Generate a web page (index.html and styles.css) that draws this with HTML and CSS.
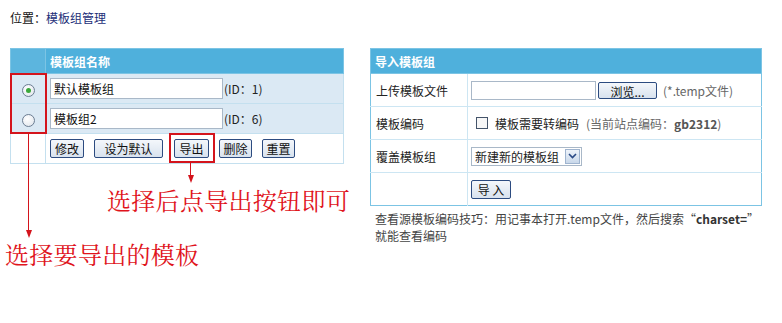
FILE: index.html
```html
<!DOCTYPE html>
<html lang="zh">
<head>
<meta charset="utf-8">
<link rel="stylesheet" href="styles.css">
</head>
<body>
<div class="page">
  <div class="crumb">位置：<span class="crumb-link">模板组管理</span></div>
  <div class="panels">
    <div class="left">
      <table class="grid gl">
        <tr class="hd"><th class="sel"></th><th class="name">模板组名称</th></tr>
        <tr class="row"><td class="sel"><input type="radio" name="g" class="radio" checked></td><td><input class="txt" value="默认模板组"><span class="id">(ID：1)</span></td></tr>
        <tr class="row"><td class="sel"><input type="radio" name="g" class="radio"></td><td><input class="txt" value="模板组2"><span class="id">(ID：6)</span></td></tr>
        <tr class="btnrow"><td class="sel"></td><td><div class="btns"><button class="btn b34">修改</button><button class="btn b69">设为默认</button><button class="btn b35">导出</button><button class="btn b33">删除</button><button class="btn b33">重置</button></div></td></tr>
      </table>
    </div>
    <div class="right">
      <table class="grid gr">
        <tr class="hd"><th colspan="2">导入模板组</th></tr>
        <tr><td class="lbl">上传模板文件</td><td><div class="cell"><span class="file"></span><button class="btn browse">浏览...</button><span class="hint">(*.temp文件)</span></div></td></tr>
        <tr><td class="lbl">模板编码</td><td><div class="cell"><span class="chk"></span><span class="chklbl">模板需要转编码</span><span class="hint2">(当前站点编码：<b>gb2312</b>)</span></div></td></tr>
        <tr><td class="lbl">覆盖模板组</td><td><div class="cell"><span class="select">新建新的模板组<span class="arrow"><svg width="9" height="6" viewBox="0 0 9 6"><path d="M1 1 L4.5 4.5 L8 1" fill="none" stroke="#2a4a86" stroke-width="1.6"/></svg></span></span></div></td></tr>
        <tr><td class="lbl"></td><td><div class="cell"><button class="btn imp">导 入</button></div></td></tr>
      </table>
      <div class="note">查看源模板编码技巧：用记事本打开.temp文件，然后搜索“<b>charset=</b>”<br>就能查看编码</div>
    </div>
  </div>
</div>
<div class="mark mark-radio"></div>
<div class="mark mark-export"></div>
<div class="line line1"></div><div class="head head1"></div>
<div class="line line2"></div><div class="head head2"></div>
<div class="anno anno1">选择要导出的模板</div>
<div class="anno anno2">选择后点导出按钮即可</div>
</body>
</html>
```
FILE: styles.css
```css
* { box-sizing: border-box; }
body { margin: 0; background: #fff; font-family: "Noto Sans CJK SC", "DejaVu Sans", sans-serif; font-size: 12px; color: #222; position: relative; width: 782px; height: 323px; overflow: hidden; }
.page { padding: 10px 0 0 10px; }
.crumb { height: 16px; line-height: 16px; color: #111; }
.crumb-link { color: #1c2e78; }
.panels { display: flex; margin-top: 22px; }
.left { width: 334px; }
.right { width: 392px; margin-left: 26px; }
.grid { border-collapse: collapse; width: 100%; border: 1px solid #7cc4e4; }
.grid th { background: #4fb0dc; color: #fff; font-weight: bold; text-align: left; height: 25px; padding: 0 0 0 4px; border: 1px solid #7cc4e4; }
.gl td { border: 1px solid #c4e0ef; padding: 0; }
.gl .sel { width: 35px; text-align: center; }
.gl th.sel { background: #5cb5de; }
.gl .row td { background: #dbe9f4; height: 30px; }
.gl .row td + td { padding-left: 4px; }
.gl .btnrow td { height: 30px; background: #fff; }
.gl .btnrow td + td { padding-left: 4px; }
.txt { width: 173px; height: 21px; border: 1px solid #a9b8c8; padding: 1px 3px; font: inherit; font-size: 12px; color: #111; background: #fff; vertical-align: middle; }
.id { vertical-align: middle; margin-left: 1px; }
.radio { appearance: none; -webkit-appearance: none; width: 13px; height: 13px; border-radius: 50%; border: 1px solid #6b7d92; background: radial-gradient(circle at 40% 35%, #fff, #dde3ea); margin: 0; vertical-align: middle; position: relative; }
.radio:checked::after { content: ""; position: absolute; left: 3px; top: 3px; width: 5px; height: 5px; border-radius: 50%; background: #3aa83a; }
.btns { display: flex; align-items: center; }
.btns .btn + .btn { margin-left: 10px; }
.btns .b69 + .btn { margin-left: 11px; }
.btn { font: inherit; font-size: 12px; height: 19px; padding: 0; border: 1px solid #2c4b80; border-radius: 2px; background: linear-gradient(#f4f7fb, #d8e2ee); color: #111; line-height: 17px; cursor: default; text-align: center; }
.b34 { width: 34px; }
.b69 { width: 69px; }
.b35 { width: 35px; }
.b33 { width: 33px; }
.gr td { border-top: 1px solid #cde6f3; height: 33px; padding: 0; background: #fff; }
.gr td.lbl { width: 97px; padding-left: 5px; border-right: 1px solid #cde6f3; }
.gr .cell { display: flex; align-items: center; padding-left: 3px; }
.file { width: 125px; height: 19px; border: 1px solid #a9b8c8; background: #fff; }
.browse { margin-left: 2px; width: 59px; height: 17px; padding: 0; }
.hint { margin-left: 6px; color: #666; }
.chk { width: 12px; height: 12px; border: 1px solid #44546a; background: #f7f7f7; margin-left: 5px; }
.chklbl { margin-left: 7px; }
.hint2 { margin-left: 7px; color: #666; }
.hint2 b { color: #555; }
.select { display: flex; align-items: center; width: 111px; height: 19px; border: 1px solid #a9b8c8; padding-left: 3px; background: #fff; justify-content: space-between; }
.arrow { width: 15px; height: 15px; margin-right: 1px; border: 1px solid #9fb4cf; background: linear-gradient(#eef3fa, #c9d8ea); display: flex; align-items: center; justify-content: center; }
.imp { width: 40px; padding: 0; }
.note { margin-top: 4px; padding-left: 5px; line-height: 17px; color: #444; }
.note b { color: #333; }
.mark { position: absolute; border: 2px solid #d4141c; }
.mark-radio { left: 10px; top: 73px; width: 37px; height: 61px; }
.mark-export { left: 169px; top: 133px; width: 46px; height: 30px; }
.line { position: absolute; width: 1px; background: #d4141c; }
.line1 { left: 28px; top: 134px; height: 98px; }
.line2 { left: 190px; top: 163px; height: 14px; }
.head { position: absolute; width: 0; height: 0; border-left: 3px solid transparent; border-right: 3px solid transparent; border-top: 8px solid #d4141c; }
.head1 { left: 25.5px; top: 230px; }
.head2 { left: 187.5px; top: 175px; }
.anno { position: absolute; color: #e0141c; font-size: 24px; line-height: 26px; letter-spacing: 0.3px; white-space: nowrap; font-family: "Noto Serif CJK SC", "Noto Sans CJK SC", serif; }
.anno1 { left: 5px; top: 241px; }
.anno2 { left: 107px; top: 187px; }
```
